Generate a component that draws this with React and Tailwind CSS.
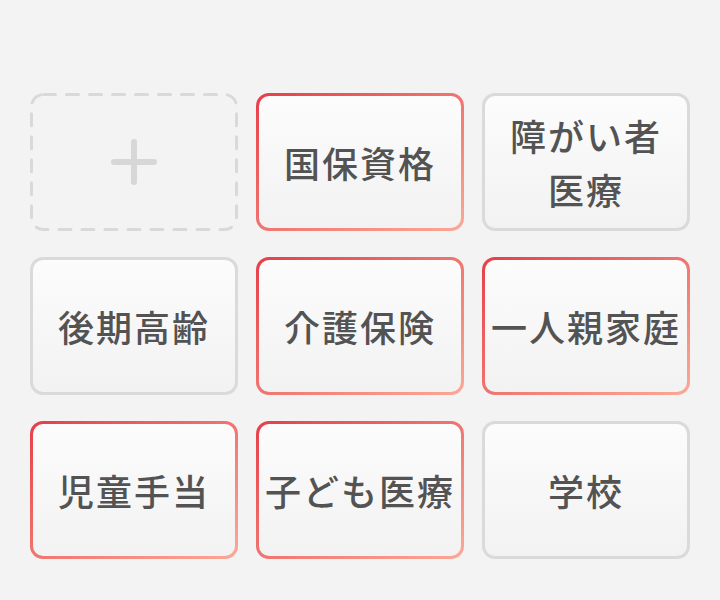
import React from "react";

const items = [
  { label: "国保資格", active: true },
  { label: ["障がい者", "医療"], active: false },
  { label: "後期高齢", active: false },
  { label: "介護保険", active: true },
  { label: "一人親家庭", active: true },
  { label: "児童手当", active: true },
  { label: "子ども医療", active: true },
  { label: "学校", active: false },
];

function CardText({ label }) {
  const lines = Array.isArray(label) ? label : [label];
  return (
    <div className="flex flex-col items-center text-[36px] leading-[54px] font-medium tracking-[2px] text-[#535353]">
      {lines.map((l) => (
        <span key={l}>{l}</span>
      ))}
    </div>
  );
}

function Card({ label, active }) {
  return (
    <div
      className={`h-[138px] rounded-[13px] p-[3px] ${
        active
          ? "bg-gradient-to-br from-[#e63d49] via-[#f07470] to-[#fba897]"
          : "bg-[#dadada]"
      }`}
    >
      <div className="flex h-full items-center justify-center rounded-[10px] bg-gradient-to-b from-[#fcfcfc] to-[#f2f2f2]">
        <CardText label={label} />
      </div>
    </div>
  );
}

// dashed outline drawn in svg so the dash length matches
function AddCard() {
  return (
    <div className="h-[138px]">
      <svg width="100%" height="138" viewBox="0 0 208 138" fill="none">
        <rect
          x="1.5"
          y="1.5"
          width="205"
          height="135"
          rx="12"
          stroke="#d9d9d9"
          strokeWidth="3"
          strokeDasharray="12 11"
          strokeLinecap="round"
        />
        <path
          d="M104 49v40M84 69h40"
          stroke="#d7d7d7"
          strokeWidth="6"
          strokeLinecap="round"
        />
      </svg>
    </div>
  );
}

export default function App() {
  return (
    <div
      className="min-h-[600px] w-[720px] bg-[#f3f3f3] px-[30px] pt-[93px]"
      style={{ fontFamily: '"Noto Sans CJK JP", "Noto Sans", sans-serif' }}
    >
      <div className="grid grid-cols-3 gap-x-[18px] gap-y-[26px]">
        <AddCard />
        {items.map((it, i) => (
          <Card key={i} label={it.label} active={it.active} />
        ))}
      </div>
    </div>
  );
}
